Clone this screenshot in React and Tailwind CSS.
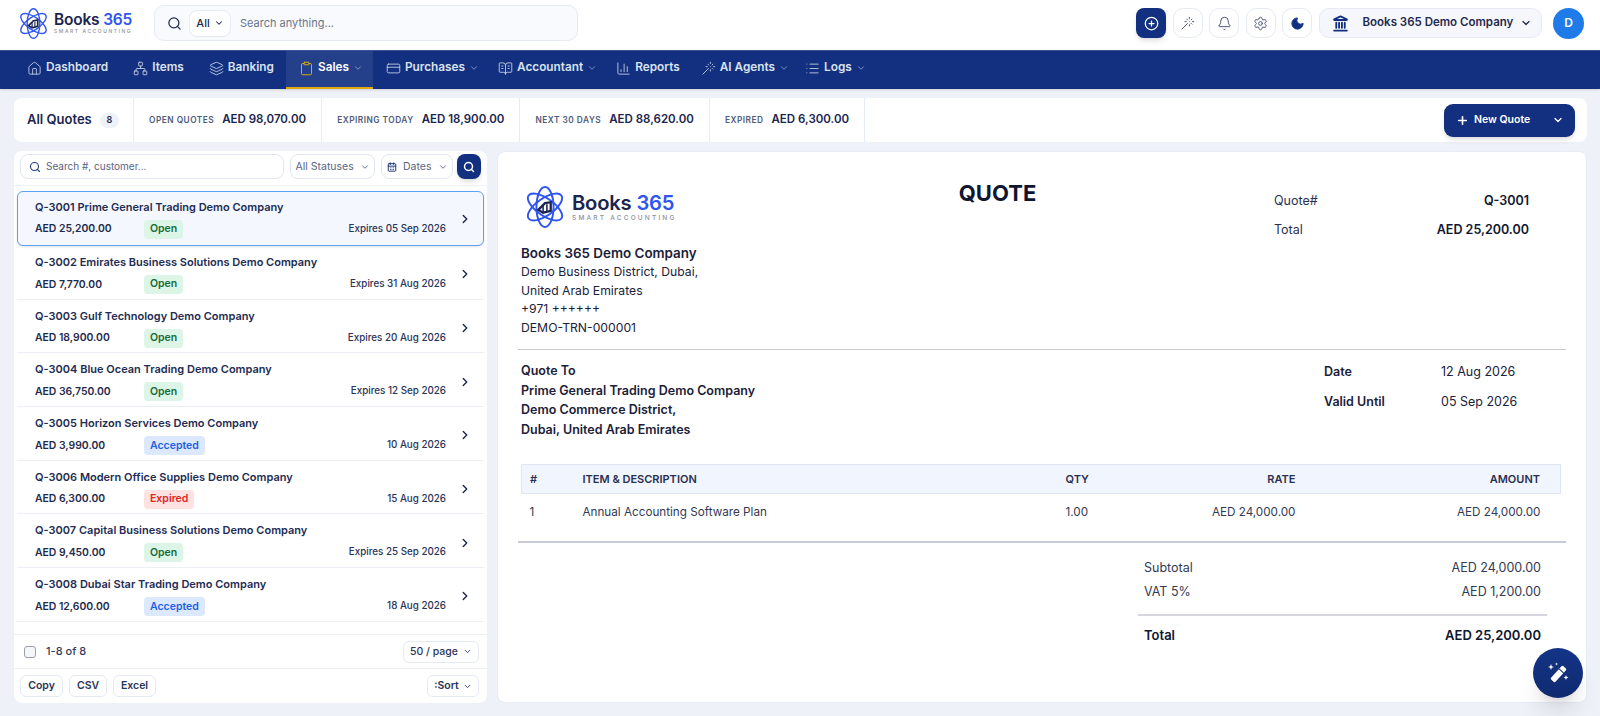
import {
  Search, ChevronDown, ChevronRight, CirclePlus, Wand, Bell, Settings, Moon, Landmark, Home, Network, Layers,
  Clipboard, CreditCard, BookOpenText, ChartColumn, List, Plus, CalendarDays,
} from 'lucide-react';

const NAV = [
  { label: 'Dashboard', icon: Home, pad: 'pr-[12px]' },
  { label: 'Items', icon: Network, pad: 'pr-[12px]' },
  { label: 'Banking', icon: Layers, pad: 'pr-[12px]' },
  { label: 'Sales', icon: Clipboard, caret: true, active: true, pad: 'pr-[10px]' },
  { label: 'Purchases', icon: CreditCard, caret: true, pad: 'pr-[6px]' },
  { label: 'Accountant', icon: BookOpenText, caret: true, pad: 'pr-[6px]' },
  { label: 'Reports', icon: ChartColumn, pad: 'pr-[8px]' },
  { label: 'AI Agents', icon: Wand, caret: true, pad: 'pr-[3px]' },
  { label: 'Logs', icon: List, caret: true, pad: 'pr-[6px]' },
];

const STATS = [
  { label: 'OPEN QUOTES', value: 'AED 98,070.00' },
  { label: 'EXPIRING TODAY', value: 'AED 18,900.00' },
  { label: 'NEXT 30 DAYS', value: 'AED 88,620.00' },
  { label: 'EXPIRED', value: 'AED 6,300.00' },
];

const QUOTES = [
  { no: 'Q-3001', name: 'Prime General Trading Demo Company', amount: 'AED 25,200.00', status: 'Open', date: 'Expires 05 Sep 2026' },
  { no: 'Q-3002', name: 'Emirates Business Solutions Demo Company', amount: 'AED 7,770.00', status: 'Open', date: 'Expires 31 Aug 2026' },
  { no: 'Q-3003', name: 'Gulf Technology Demo Company', amount: 'AED 18,900.00', status: 'Open', date: 'Expires 20 Aug 2026' },
  { no: 'Q-3004', name: 'Blue Ocean Trading Demo Company', amount: 'AED 36,750.00', status: 'Open', date: 'Expires 12 Sep 2026' },
  { no: 'Q-3005', name: 'Horizon Services Demo Company', amount: 'AED 3,990.00', status: 'Accepted', date: '10 Aug 2026' },
  { no: 'Q-3006', name: 'Modern Office Supplies Demo Company', amount: 'AED 6,300.00', status: 'Expired', date: '15 Aug 2026' },
  { no: 'Q-3007', name: 'Capital Business Solutions Demo Company', amount: 'AED 9,450.00', status: 'Open', date: 'Expires 25 Sep 2026' },
  { no: 'Q-3008', name: 'Dubai Star Trading Demo Company', amount: 'AED 12,600.00', status: 'Accepted', date: '18 Aug 2026' },
];

const BADGE = {
  Open: 'bg-[#dcf5e7] text-[#166b3a]',
  Accepted: 'bg-[#dbe8fe] text-[#1d5fe0]',
  Expired: 'bg-[#fee2e2] text-[#dc2626]',
};

function Logo({ large }) {
  const size = large ? 'w-[42px] h-[42px]' : 'w-[31px] h-[31px]';
  return (
    <div className={`flex items-center ${large ? 'gap-[6px]' : 'gap-[5px]'}`}>
      <svg viewBox="0 0 44 44" className={size} fill="none" stroke="#2f55f0" strokeWidth="2">
        <ellipse cx="22" cy="22" rx="21" ry="9" transform="rotate(35 22 22)" />
        <ellipse cx="22" cy="22" rx="21" ry="9" transform="rotate(-35 22 22)" />
        <ellipse cx="22" cy="22" rx="21" ry="9" transform="rotate(90 22 22)" />
        <path d="M15 25l7-7 6-1v9l-8 2z" fill="#fff" stroke="#1b2550" strokeWidth="2.4" />
        <path d="M20 21v6M24 19v8" stroke="#1b2550" strokeWidth="1.6" />
      </svg>
      <div className="flex flex-col">
        <div className={`font-semibold tracking-[-0.2px] ${large ? 'text-[20.2px] leading-[22px]' : 'text-[15.5px] leading-[17px]'}`}>
          <span className="text-[#1b2550]">Books </span>
          <span className="text-[#2f55f0]">365</span>
        </div>
        <div className={`font-medium text-[#8a90a0] ${large ? 'text-[6.5px] tracking-[2.2px] leading-[9px]' : 'text-[5px] tracking-[1.55px] leading-[7px]'}`}>
          SMART ACCOUNTING
        </div>
      </div>
    </div>
  );
}

function IconButton({ icon: Icon, filled }) {
  return (
    <button className="w-[30px] h-[30px] rounded-[10px] border border-[#e6eaf4] bg-white flex items-center justify-center">
      <Icon size={15} strokeWidth={1.5} className={filled ? 'text-[#12307f] fill-[#12307f]' : 'text-[#46506c]'} />
    </button>
  );
}

function TopBar() {
  return (
    <header className="h-[50px] shrink-0 bg-white flex items-center pl-[18px] pr-4 pb-[4px]">
      <div className="w-[136px]">
        <Logo />
      </div>
      <div className="w-[424px] h-[36px] rounded-[10px] border border-[#e6eaf4] bg-[#f8fafd] flex items-center pl-3 pr-3">
        <Search size={15} strokeWidth={2} className="text-[#1f2a4d]" />
        <div className="ml-[7px] h-[27px] w-[42px] rounded-lg border border-[#e6eaf4] bg-white flex items-center justify-center gap-1 text-[11px] font-medium text-[#1f2a4d]">
          All
          <ChevronDown size={10} strokeWidth={2.5} />
        </div>
        <span className="ml-[9px] text-[11px] text-[#6b7489]">Search anything...</span>
      </div>
      <div className="ml-auto flex items-center gap-[6.5px]">
        <button className="w-[30px] h-[30px] rounded-[8px] bg-[#12307f] shadow-md flex items-center justify-center">
          <CirclePlus size={15} strokeWidth={2} className="text-white" />
        </button>
        <IconButton icon={Wand} />
        <IconButton icon={Bell} />
        <IconButton icon={Settings} />
        <IconButton icon={Moon} filled />
        <div className="w-[223px] h-[30px] rounded-[10px] border border-[#e6eaf4] bg-[#f5f7fc] flex items-center pl-[12px]">
          <Landmark size={17} strokeWidth={2.6} className="text-[#12307f]" />
          <span className="ml-[14px] text-[11.5px] font-semibold text-[#1f2a4d] whitespace-nowrap">Books 365 Demo Company</span>
          <ChevronDown size={12} strokeWidth={2.5} className="ml-[7px] text-[#1f2a4d]" />
        </div>
        <div className="ml-[5px] w-[31px] h-[31px] rounded-full bg-[#1f7be8] text-white text-[12px] font-semibold flex items-center justify-center">
          D
        </div>
      </div>
    </header>
  );
}

function NavBar() {
  return (
    <nav className="h-[39px] shrink-0 bg-[#12307f] flex items-stretch pl-[14px] border-t border-[#3b548f] shadow-sm">
      {NAV.map((item) => {
        const Icon = item.icon;
        return (
          <div
            key={item.label}
            className={`flex items-center gap-[4px] pb-[2px] pl-[13px] border-b-2 ${item.pad} ${item.active ? 'bg-[#25408a] border-[#e0a80d]' : 'border-transparent'}`}
          >
            <Icon size={15} strokeWidth={1.4} className={item.active ? 'text-[#f0b90b]' : 'text-[#c6d0e6]'} />
            <span className={`text-[11.8px] font-semibold ${item.active ? 'text-white' : 'text-[#dbe2f0]'}`}>{item.label}</span>
            {item.caret && <ChevronDown size={10} strokeWidth={2} className="text-[#93a3c8]" />}
          </div>
        );
      })}
    </nav>
  );
}

function StatsBar() {
  return (
    <div className="h-[44px] shrink-0 rounded-lg bg-white flex items-center">
      <div className="w-[120px] h-full pl-[13px] flex items-center gap-[8px] border-r border-[#e8ecf5]">
        <span className="text-[13px] font-semibold text-[#1b2550]">All Quotes</span>
        <span className="h-[15px] w-[19px] rounded-full bg-[#eef1f8] text-[9px] font-semibold text-[#1f2a4d] flex items-center justify-center">8</span>
      </div>
      {STATS.map((s) => (
        <div key={s.label} className="h-full px-[15px] flex items-center gap-[8px] border-r border-[#e8ecf5]">
          <span className="text-[8.3px] font-semibold tracking-[0.5px] text-[#4f5b7c] whitespace-nowrap">{s.label}</span>
          <span className="text-[11.5px] font-semibold text-[#1b2550] whitespace-nowrap">{s.value}</span>
        </div>
      ))}
      <div className="ml-auto mr-[12px] w-[131px] h-[33px] rounded-[9px] bg-[#12307f] shadow-md flex items-center text-white pl-[12px]">
        <Plus size={13} strokeWidth={3} />
        <span className="ml-[5px] text-[10.5px] font-semibold">New Quote</span>
        <ChevronDown size={12} strokeWidth={2.5} className="ml-auto mr-[11px]" />
      </div>
    </div>
  );
}

function QuoteRow({ q, selected }) {
  return (
    <div className={selected ? 'h-[55px] rounded-md border border-[#5aa2f2] bg-[#f4f8fe] flex items-center pt-[1px] pl-[17px] pr-[11px] shadow-sm' : 'h-[53.7px] border-b border-[#eceff6] flex items-center pt-[4px] pl-[18px] pr-[12px]'}>
      <div className="flex-1 min-w-0">
        <div className="text-[11px] font-semibold text-[#232c52] leading-[14px] whitespace-nowrap">
          {q.no} {q.name}
        </div>
        <div className="mt-[6px] h-[19px] flex items-center text-[10.4px] font-semibold text-[#1f2a4d]">
          <span className="w-[109px]">{q.amount}</span>
          <span className={`h-[19px] px-[6px] rounded-[4px] text-[10.5px] font-semibold flex items-center ${BADGE[q.status]}`}>{q.status}</span>
          <span className="ml-auto text-[9.8px] font-medium text-[#2a3456]">{q.date}</span>
        </div>
      </div>
      <ChevronRight size={14} strokeWidth={2.4} className="ml-[12px] text-[#1b2550]" />
    </div>
  );
}

function SmallButton({ children, className = '' }) {
  return (
    <div className={`h-[22px] rounded-md border border-[#e6eaf4] bg-white flex items-center justify-center text-[10.5px] font-medium text-[#2a3456] ${className}`}>
      {children}
    </div>
  );
}

function QuoteList() {
  return (
    <aside className="w-[473px] shrink-0 rounded-lg bg-white flex flex-col">
      <div className="h-[35px] shrink-0 flex items-start pt-[3px] pl-[6px] pr-[6px] gap-[6px] border-b border-[#f0f2f8]">
        <div className="w-[265px] h-[25px] rounded-lg border border-[#e1e6f2] flex items-center pl-2 text-[10px] text-[#5b6480]">
          <Search size={12} strokeWidth={2.2} className="text-[#1f3a7a] mr-[5px]" />
          Search #, customer...
        </div>
        <div className="w-[86px] h-[25px] rounded-lg border border-[#e1e6f2] flex items-center justify-center gap-[6px] text-[10.5px] text-[#5b6480]">
          All Statuses
          <ChevronDown size={10} strokeWidth={2.2} />
        </div>
        <div className="w-[72px] h-[25px] rounded-lg border border-[#e1e6f2] flex items-center justify-center gap-[6px] text-[10.5px] text-[#5b6480]">
          <CalendarDays size={10} strokeWidth={2.4} className="text-[#1f3a7a]" />
          Dates
          <ChevronDown size={10} strokeWidth={2.2} />
        </div>
        <div className="w-[24px] h-[25px] -ml-[2px] rounded-lg bg-[#12307f] shadow-md flex items-center justify-center">
          <Search size={12} strokeWidth={3} className="text-white" />
        </div>
      </div>
      <div className="flex-1 px-[3px] pt-[5px]">
        {QUOTES.map((q, i) => (
          <QuoteRow key={q.no} q={q} selected={i === 0} />
        ))}
      </div>
      <div className="h-[34px] shrink-0 border-t border-[#eceff6] flex items-center pl-[10px] pr-[8px]">
        <span className="w-[12px] h-[12px] rounded-[3px] border border-[#9aa0ad] bg-[#f5f6f8]" />
        <span className="ml-[10px] text-[11px] font-medium text-[#333c5c]">1-8 of 8</span>
        <SmallButton className="ml-auto w-[76px] gap-[5px]">
          50 / page
          <ChevronDown size={9} strokeWidth={2.4} />
        </SmallButton>
      </div>
      <div className="h-[35px] shrink-0 border-t border-[#eceff6] flex items-center pl-[6px] pr-[8px] gap-[6px]">
        <SmallButton className="w-[43px] font-semibold">Copy</SmallButton>
        <SmallButton className="w-[38px] font-semibold">CSV</SmallButton>
        <SmallButton className="w-[43px] font-semibold">Excel</SmallButton>
        <SmallButton className="ml-auto w-[52px] gap-[4px] font-semibold">
          :Sort
          <ChevronDown size={9} strokeWidth={2.4} />
        </SmallButton>
      </div>
    </aside>
  );
}

function QuoteDoc() {
  return (
    <section className="flex-1 rounded-lg bg-white border border-[#e8ecf5] pt-[34px] px-[20px] text-[#1b2138]">
      <div className="h-[163px] flex px-[3px]">
        <div className="w-[320px]">
          <div className="pl-[3px] h-[46px]">
            <Logo large />
          </div>
          <div className="mt-[12px] text-[12.2px] leading-[18.8px]">
            <div className="font-semibold text-[13.4px]">Books 365 Demo Company</div>
            <div>Demo Business District, Dubai,</div>
            <div>United Arab Emirates</div>
            <div>+971 ++++++</div>
            <div>DEMO-TRN-000001</div>
          </div>
        </div>
        <div className="w-[313px] -mt-[4px] text-[22px] font-bold text-[#0f1630] leading-[22px] text-center">QUOTE</div>
        <div className="w-[255px] ml-[120px] mt-[6px] text-[12.5px] text-[#2a3050]">
          <div className="flex justify-between h-[29px]">
            <span>Quote#</span>
            <span className="font-semibold text-[#0f1630]">Q-3001</span>
          </div>
          <div className="flex justify-between">
            <span>Total</span>
            <span className="font-semibold text-[#0f1630]">AED 25,200.00</span>
          </div>
        </div>
      </div>
      <div className="h-px bg-[#c9ccd6]" />
      <div className="mt-[11px] h-[103px] flex px-[3px] text-[12.5px] font-semibold leading-[19.6px]">
        <div className="w-[803px]">
          <div>Quote To</div>
          <div>Prime General Trading Demo Company</div>
          <div>Demo Commerce District,</div>
          <div>Dubai, United Arab Emirates</div>
        </div>
        <div className="w-[117px] pt-[1px]">
          <div className="h-[30px]">Date</div>
          <div>Valid Until</div>
        </div>
        <div className="font-normal pt-[1px]">
          <div className="h-[30px]">12 Aug 2026</div>
          <div>05 Sep 2026</div>
        </div>
      </div>
      <table className="mx-[3px] w-[1040px] table-fixed text-[11.7px]">
        <thead>
          <tr className="h-[29px] bg-[#f1f5fd] border border-[#dfe5f2] text-[11px] font-semibold text-[#2a3050]">
            <th className="w-[61px] pl-[8px] text-left font-semibold">#</th>
            <th className="w-[483px] text-left font-semibold">ITEM &amp; DESCRIPTION</th>
            <th className="w-[90px] text-left font-semibold">QTY</th>
            <th className="w-[140px] text-right font-semibold">RATE</th>
            <th className="pr-[20px] text-right font-semibold">AMOUNT</th>
          </tr>
        </thead>
        <tbody>
          <tr className="h-[39px] text-[#333a55]">
            <td className="pl-[8px]">1</td>
            <td>Annual Accounting Software Plan</td>
            <td>1.00</td>
            <td className="text-right">AED 24,000.00</td>
            <td className="pr-[20px] text-right">AED 24,000.00</td>
          </tr>
        </tbody>
      </table>
      <div className="mt-[8px] h-[2px] bg-[#c9ccd6]" />
      <div className="ml-[620px] w-[409px] mt-[14px] text-[12.5px] text-[#333a55]">
        <div className="px-[6px] flex justify-between h-[24px] items-center">
          <span>Subtotal</span>
          <span>AED 24,000.00</span>
        </div>
        <div className="px-[6px] flex justify-between h-[24px] items-center">
          <span>VAT 5%</span>
          <span>AED 1,200.00</span>
        </div>
        <div className="mt-[9px] h-[2px] bg-[#d5d6df]" />
        <div className="px-[6px] mt-[10px] flex justify-between text-[13px] font-semibold text-[#0f1630]">
          <span>Total</span>
          <span>AED 25,200.00</span>
        </div>
      </div>
    </section>
  );
}

export default function App() {
  return (
    <div className="relative h-[716px] overflow-hidden bg-[#eef1f8] flex flex-col font-['Inter',sans-serif]">
      <TopBar />
      <NavBar />
      <main className="flex-1 min-h-0 flex flex-col gap-[9px] pt-[9px] pb-[13px] pl-[14px] pr-[13px]">
        <StatsBar />
        <div className="flex-1 min-h-0 flex gap-[10px]">
          <QuoteList />
          <QuoteDoc />
        </div>
      </main>
      {/* floating assistant button */}
      <button className="absolute left-[1533px] top-[648px] w-[50px] h-[50px] rounded-full bg-linear-to-b from-[#143488] to-[#0f2a6e] shadow-xl flex items-center justify-center">
        <svg viewBox="0 0 24 24" className="w-[24px] h-[24px]" fill="#fff">
          <rect x="9.5" y="4" width="6" height="18" rx="1.2" transform="rotate(42 12.5 13)" />
          <rect x="9.5" y="8.2" width="6" height="1.2" fill="#12307f" transform="rotate(42 12.5 13)" />
          <path d="M5 3l.8 2.2L8 6l-2.2.8L5 9l-.8-2.2L2 6l2.2-.8zM20 14l.7 1.8 1.8.7-1.8.7L20 19l-.7-1.8-1.8-.7 1.8-.7zM10.500 1.500l.4 1.100 1.100.4-1.100.4-.4 1.100-.4-1.100-1.100-.4 1.100-.4z" />
        </svg>
      </button>
    </div>
  );
}
